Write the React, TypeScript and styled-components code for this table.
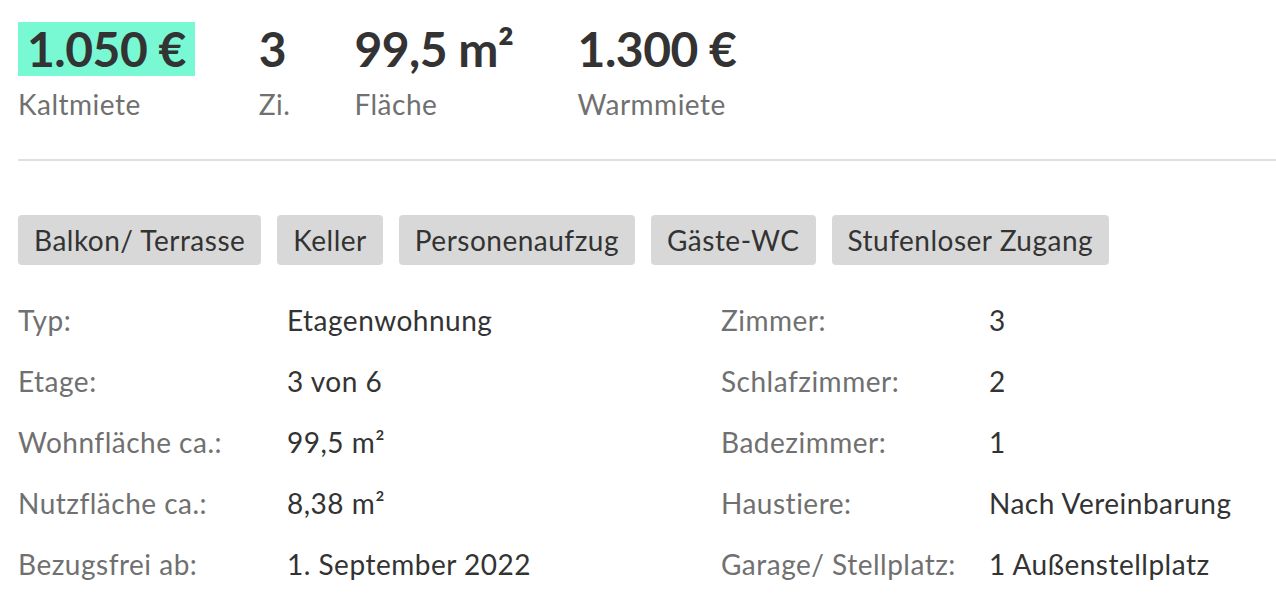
import styled, { createGlobalStyle } from "styled-components"

const GlobalStyle = createGlobalStyle`
  body {
    margin: 0;
    background: #fff;
    font-family: Lato, "Open Sans", sans-serif;
    color: #333;
  }
`

type Stat = {
  value: string
  label: string
  highlight?: boolean
}

const stats: Stat[] = [
  { value: "1.050 €", label: "Kaltmiete", highlight: true },
  { value: "3", label: "Zi." },
  { value: "99,5 m²", label: "Fläche" },
  { value: "1.300 €", label: "Warmmiete" },
]

const tags = ["Balkon/ Terrasse", "Keller", "Personenaufzug", "Gäste-WC", "Stufenloser Zugang"]

const details: [string, string, string, string][] = [
  ["Typ:", "Etagenwohnung", "Zimmer:", "3"],
  ["Etage:", "3 von 6", "Schlafzimmer:", "2"],
  ["Wohnfläche ca.:", "99,5 m²", "Badezimmer:", "1"],
  ["Nutzfläche ca.:", "8,38 m²", "Haustiere:", "Nach Vereinbarung"],
  ["Bezugsfrei ab:", "1. September 2022", "Garage/ Stellplatz:", "1 Außenstellplatz"],
]

export default function App() {
  return (
    <>
      <GlobalStyle />
      <Page>
        <StatsRow>
          {stats.map((s) => (
            <StatBlock key={s.label}>
              <StatValue $highlight={s.highlight}>{s.value}</StatValue>
              <StatLabel>{s.label}</StatLabel>
            </StatBlock>
          ))}
        </StatsRow>
        <Divider />
        <TagList>
          {tags.map((t) => (
            <Tag key={t}>{t}</Tag>
          ))}
        </TagList>
        <DetailGrid>
          {details.map((row) =>
            row.map((cell, i) =>
              i % 2 === 0 ? <Label key={cell}>{cell}</Label> : <Value key={row[i - 1] + cell}>{cell}</Value>
            )
          )}
        </DetailGrid>
      </Page>
    </>
  )
}

const Page = styled.main`
  padding: 22px 0 0 18px;
`

const StatsRow = styled.section`
  display: flex;
  align-items: flex-start;
  gap: 64px;
`

const StatBlock = styled.div`
  display: flex;
  flex-direction: column;
`

const StatValue = styled.div<{ $highlight?: boolean }>`
  font-size: 48px;
  font-weight: 700;
  letter-spacing: -0.5px;
  line-height: 54px;
  color: #333;
  white-space: nowrap;
  padding: ${(p) => (p.$highlight ? "0 9px" : "0")};
  background: ${(p) => (p.$highlight ? "#78f9d3" : "transparent")};
`

const StatLabel = styled.div`
  margin-top: 12px;
  font-size: 28px;
  letter-spacing: 0.5px;
  line-height: 32px;
  color: #707070;
`

const Divider = styled.hr`
  margin: 39px 0 0;
  border: 0;
  border-top: 2px solid #e0e0e0;
`

const TagList = styled.div`
  display: flex;
  gap: 16px;
  margin-top: 54px;
`

const Tag = styled.span`
  display: inline-flex;
  align-items: center;
  height: 50px;
  padding: 0 16px;
  border-radius: 4px;
  background: #d8d8d8;
  font-size: 28px;
  letter-spacing: 0.5px;
  color: #333;
`

const DetailGrid = styled.div`
  display: grid;
  grid-template-columns: 269px 434px 268px 1fr;
  grid-auto-rows: 61px;
  align-items: center;
  margin-top: 24px;
`

const Label = styled.div`
  font-size: 28px;
  letter-spacing: 0.5px;
  color: #707070;
`

const Value = styled.div`
  font-size: 28px;
  letter-spacing: 0.5px;
  color: #333;
`
